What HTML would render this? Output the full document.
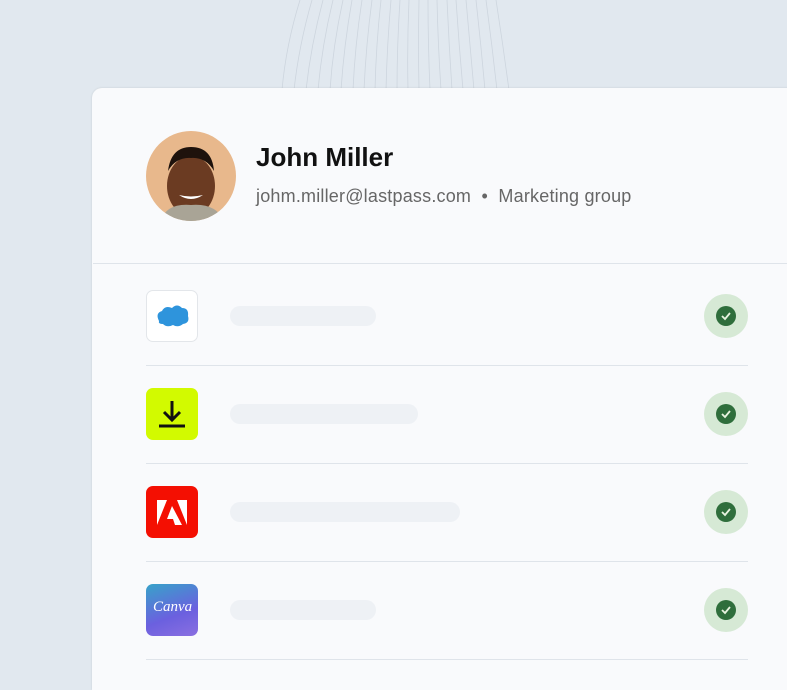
<!DOCTYPE html>
<html><head><style>
html,body{margin:0;width:787px;height:690px;overflow:hidden}
body{background:#e1e8ef;position:relative;font-family:"Liberation Sans",sans-serif}
.card{position:absolute;left:92px;top:88px;width:720px;height:602px;background:#f9fafc;border-radius:10px 0 0 0;box-shadow:0 0 2px rgba(0,0,0,.12)}
.av{position:absolute;left:146px;top:131px;width:90px;height:90px;border-radius:50%;background:#e8b88c;overflow:hidden}
.name{position:absolute;left:256px;top:142px;font-size:26px;font-weight:bold;color:#111}
.sub{position:absolute;left:256px;top:186px;font-size:18px;color:#666;letter-spacing:0.2px}
.hr{position:absolute;height:1px;background:#dfe4ea}
.ic{position:absolute;left:146px;width:52px;height:52px;border-radius:7px;box-sizing:border-box}
.bar{position:absolute;left:230px;height:20px;border-radius:10px;background:#eef1f5}
.ck{position:absolute;left:704px;width:44px;height:44px;border-radius:50%;background:#d6e9d5}
.ck div{position:absolute;left:12px;top:12px;width:20px;height:20px;border-radius:50%;background:#2f6e3c}
</style></head><body>
<svg style="position:absolute;left:260px;top:0" width="270" height="90">
<g fill="none" stroke="#cdd5de" stroke-width="0.8">
<path d="M40 0 Q26 45 22 90"/><path d="M52 0 Q39 45 34 90"/><path d="M63 0 Q51 45 46 90"/><path d="M73 0 Q62 45 58 90"/><path d="M83 0 Q73 45 70 90"/><path d="M92 0 Q84 45 81 90"/><path d="M102 0 Q95 45 93 90"/><path d="M112 0 Q106 45 104 90"/><path d="M121 0 Q116 45 115 90"/><path d="M131 0 Q127 45 126 90"/><path d="M140 0 Q137 45 137 90"/><path d="M149 0 Q147 45 148 90"/><path d="M159 0 Q158 45 159 90"/><path d="M168 0 Q168 45 170 90"/><path d="M177 0 Q178 45 181 90"/><path d="M187 0 Q189 45 192 90"/><path d="M196 0 Q199 45 203 90"/><path d="M206 0 Q210 45 214 90"/><path d="M216 0 Q221 45 225 90"/><path d="M226 0 Q232 45 237 90"/><path d="M236 0 Q243 45 249 90"/>
</g></svg>
<div class="card"></div>
<div class="av"><svg width="90" height="90"><ellipse cx="45" cy="55" rx="24" ry="30" fill="#6b3b22"/><path d="M22 40 Q25 16 45 16 Q66 16 68 40 Q60 26 45 27 Q30 26 22 40Z" fill="#1e120c"/><path d="M15 90 Q20 72 45 74 Q70 72 78 90Z" fill="#a9a496"/><path d="M33 64 Q45 72 57 64 Q45 67 33 64Z" fill="#fff"/></svg></div>
<div class="name">John Miller</div>
<div class="sub">johm.miller@lastpass.com &nbsp;•&nbsp; Marketing group</div>
<div class="hr" style="left:93px;top:263px;width:694px"></div>
<div class="hr" style="left:146px;top:365px;width:602px"></div>
<div class="hr" style="left:146px;top:463px;width:602px"></div>
<div class="hr" style="left:146px;top:561px;width:602px"></div>
<div class="hr" style="left:146px;top:659px;width:602px"></div>
<div class="ic" style="top:290px;border:1px solid #e3e6ea;background:#fff"><svg width="50" height="50"><path d="M12 30 Q8 22 15 20 Q18 14 25 17 Q30 12 35 17 Q42 17 41 25 Q43 32 36 33 Q31 37 26 34 Q20 37 16 33 Q11 33 12 30Z" fill="#2e94dc"/></svg></div>
<div class="ic" style="top:388px;background:#d2fa00"><svg width="52" height="52"><path d="M26 13V31M18 24l8 8 8-8M13 38H39" stroke="#111" stroke-width="3" fill="none"/></svg></div>
<div class="ic" style="top:486px;background:#f40f02"><svg width="52" height="52"><path d="M11 14H21L11 39Z M31 14H41V39Z M26 20L36 39H29L27 33H21Z" fill="#fff"/></svg></div>
<div class="ic" style="top:584px;background:linear-gradient(160deg,#37a3c9,#6b60df 60%,#8a6fe0)"><span style="position:absolute;left:7px;top:15px;color:#fff;font-family:'Liberation Serif',serif;font-style:italic;font-size:15px">Canva</span></div>
<div class="bar" style="top:306px;width:146px"></div>
<div class="bar" style="top:404px;width:188px"></div>
<div class="bar" style="top:502px;width:230px"></div>
<div class="bar" style="top:600px;width:146px"></div>
<div class="ck" style="top:294px"><div><svg width="20" height="20"><path d="M6 10l3 3 5-6" stroke="#e8f3e0" stroke-width="1.8" fill="none"/></svg></div></div>
<div class="ck" style="top:392px"><div><svg width="20" height="20"><path d="M6 10l3 3 5-6" stroke="#e8f3e0" stroke-width="1.8" fill="none"/></svg></div></div>
<div class="ck" style="top:490px"><div><svg width="20" height="20"><path d="M6 10l3 3 5-6" stroke="#e8f3e0" stroke-width="1.8" fill="none"/></svg></div></div>
<div class="ck" style="top:588px"><div><svg width="20" height="20"><path d="M6 10l3 3 5-6" stroke="#e8f3e0" stroke-width="1.8" fill="none"/></svg></div></div>
</body></html>
